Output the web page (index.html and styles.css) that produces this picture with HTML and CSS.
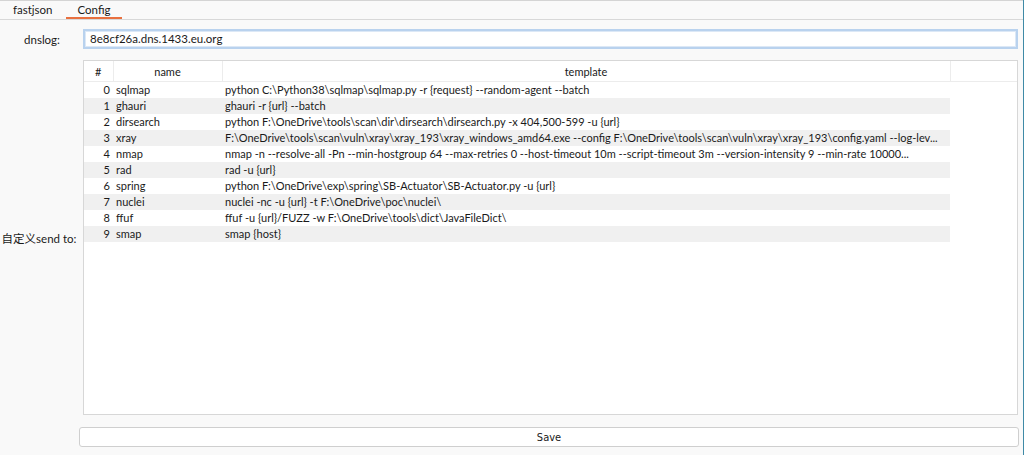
FILE: index.html
```html
<!DOCTYPE html>
<html>
<head>
<meta charset="utf-8">
<link rel="stylesheet" href="styles.css">
</head>
<body>
<div class="window">
  <div class="tabs">
    <div class="tab">fastjson</div>
    <div class="tab active">Config</div>
  </div>
  <div class="form">
    <div class="label lbl-dns">dnslog:</div>
    <div class="input">8e8cf26a.dns.1433.eu.org</div>
    <div class="label lbl-send">自定义send to:</div>
    <div class="tablebox">
      <table>
        <colgroup>
          <col class="c-num"><col class="c-name"><col class="c-tpl"><col class="c-extra">
        </colgroup>
        <thead>
          <tr><th>#</th><th>name</th><th>template</th><th class="extra"></th></tr>
        </thead>
        <tbody>
          <tr><td class="num">0</td><td>sqlmap</td><td>python C:\Python38\sqlmap\sqlmap.py -r {request} --random-agent --batch</td><td class="extra"></td></tr>
          <tr class="alt"><td class="num">1</td><td>ghauri</td><td>ghauri -r {url} --batch</td><td class="extra"></td></tr>
          <tr><td class="num">2</td><td>dirsearch</td><td>python F:\OneDrive\tools\scan\dir\dirsearch\dirsearch.py -x 404,500-599 -u {url}</td><td class="extra"></td></tr>
          <tr class="alt"><td class="num">3</td><td>xray</td><td>F:\OneDrive\tools\scan\vuln\xray\xray_193\xray_windows_amd64.exe --config F:\OneDrive\tools\scan\vuln\xray\xray_193\config.yaml --log-lev...</td><td class="extra"></td></tr>
          <tr><td class="num">4</td><td>nmap</td><td>nmap -n --resolve-all -Pn --min-hostgroup 64 --max-retries 0 --host-timeout 10m --script-timeout 3m --version-intensity 9 --min-rate 10000...</td><td class="extra"></td></tr>
          <tr class="alt"><td class="num">5</td><td>rad</td><td>rad -u {url}</td><td class="extra"></td></tr>
          <tr><td class="num">6</td><td>spring</td><td>python F:\OneDrive\exp\spring\SB-Actuator\SB-Actuator.py -u {url}</td><td class="extra"></td></tr>
          <tr class="alt"><td class="num">7</td><td>nuclei</td><td>nuclei -nc -u {url} -t F:\OneDrive\poc\nuclei\</td><td class="extra"></td></tr>
          <tr><td class="num">8</td><td>ffuf</td><td>ffuf -u {url}/FUZZ -w F:\OneDrive\tools\dict\JavaFileDict\</td><td class="extra"></td></tr>
          <tr class="alt"><td class="num">9</td><td>smap</td><td>smap {host}</td><td class="extra"></td></tr>
        </tbody>
      </table>
    </div>
  </div>
  <div class="save-row">
    <button class="save">Save</button>
  </div>
</div>
</body>
</html>
```

FILE: styles.css
```css
html, body {
  margin: 0;
  padding: 0;
}
body {
  background: #f9f9f9;
  font-family: "Lato", "Noto Sans CJK SC", sans-serif;
  font-size: 11px;
  color: #1a1a1a;
}
.window {
  width: 1023px;
  height: 455px;
  border-right: 1px solid #3f8aa6;
  box-sizing: content-box;
  overflow: hidden;
}
.tabs {
  display: flex;
  height: 18px;
  border-top: 1px solid #d4d4d4;
  border-bottom: 1px solid #d8d8d8;
  padding-left: 4px;
}
.tab {
  padding: 0 9px;
  line-height: 18px;
  box-sizing: border-box;
  height: 18px;
  font-size: 11.5px;
}
.tab.active {
  margin-left: 4px;
  padding: 0 12px;
  border-bottom: 2px solid #e8703f;
  line-height: 17px;
}
.form {
  display: grid;
  grid-template-columns: 83px 935px;
  grid-template-rows: 20px 355px;
  row-gap: 11px;
  margin-top: 9px;
}
.label {
  display: flex;
  align-items: center;
  justify-content: center;
  padding-right: 2px;
  font-size: 11.5px;
}
.lbl-dns {
  padding-left: 3px;
}
.lbl-send {
  padding-right: 5px;
}
.input {
  box-sizing: border-box;
  border: 2px solid #b9d2ee;
  outline: 1px solid #dce8f6;
  outline-offset: -3px;
  background: #fff;
  padding-left: 5px;
  line-height: 16px;
  font-size: 11.5px;
}
.tablebox {
  box-sizing: border-box;
  border: 1px solid #d7d7d7;
  background: #fff;
  overflow: hidden;
}
table {
  border-collapse: collapse;
  table-layout: fixed;
  width: 933px;
}
.c-num { width: 29px; }
.c-name { width: 109px; }
.c-tpl { width: 728px; }
.c-extra { width: 67px; }
th {
  font-weight: normal;
  height: 20px;
  padding: 0;
  border-right: 1px solid #ececec;
  border-bottom: 1px solid #ececec;
  text-align: center;
}
th.extra {
  border-right: none;
}
td {
  height: 16px;
  padding: 0 0 0 3px;
  white-space: nowrap;
  overflow: hidden;
  text-overflow: clip;
  line-height: 16px;
}
td.num {
  text-align: right;
  padding: 0 3px 0 0;
}
tr.alt td {
  background: #f0f0f0;
}
tr.alt td.extra, td.extra {
  background: #fff;
}
.save-row {
  padding: 12px 4px 0 79px;
}
.save {
  display: block;
  width: 940px;
  height: 20px;
  box-sizing: border-box;
  background: #fff;
  border: 1px solid #cfcfcf;
  border-radius: 3px;
  font-family: "DejaVu Sans Condensed", "Liberation Sans Narrow", sans-serif;
  font-size: 11px;
  color: #1a1a1a;
  padding: 0;
}
```
